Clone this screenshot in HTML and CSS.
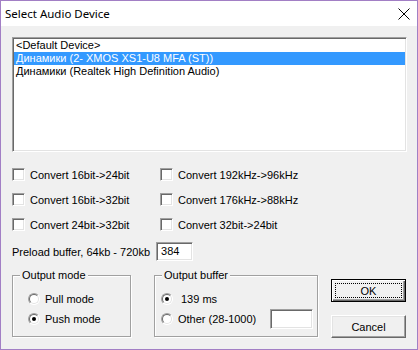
FILE: index.html
```html
<!DOCTYPE html>
<html>
<head>
<meta charset="utf-8">
<link rel="stylesheet" href="styles.css">
</head>
<body>
<div class="window">
  <div class="titlebar">
    <span class="title">Select Audio Device</span>
    <svg class="close" width="12" height="12" viewBox="0 0 12 12"><path d="M0.5 0.5 L11.5 11.5 M11.5 0.5 L0.5 11.5" stroke="#000" stroke-width="1" fill="none"/></svg>
  </div>
  <div class="client">
    <div class="listbox">
      <div class="item">&lt;Default Device&gt;</div>
      <div class="item selected">Динамики (2- XMOS XS1-U8 MFA (ST))</div>
      <div class="item">Динамики (Realtek High Definition Audio)</div>
    </div>
    <div class="checks">
      <label class="check"><span class="box"></span><span>Convert 16bit-&gt;24bit</span></label>
      <label class="check"><span class="box"></span><span>Convert 192kHz-&gt;96kHz</span></label>
      <label class="check"><span class="box"></span><span>Convert 16bit-&gt;32bit</span></label>
      <label class="check"><span class="box"></span><span>Convert 176kHz-&gt;88kHz</span></label>
      <label class="check"><span class="box"></span><span>Convert 24bit-&gt;32bit</span></label>
      <label class="check"><span class="box"></span><span>Convert 32bit-&gt;24bit</span></label>
    </div>
    <div class="preload">
      <span>Preload buffer, 64kb - 720kb</span>
      <div class="edit small">384</div>
    </div>
    <div class="bottom">
      <div class="group g1">
        <span class="legend">Output mode</span>
        <div class="radio"><span class="circle"></span><span>Pull mode</span></div>
        <div class="radio"><span class="circle on"></span><span>Push mode</span></div>
      </div>
      <div class="group g2">
        <span class="legend">Output buffer</span>
        <div class="radio"><span class="circle on"></span><span class="ms">139 ms</span></div>
        <div class="radio"><span class="circle"></span><span>Other (28-1000)</span><div class="edit other"></div></div>
      </div>
      <div class="buttons">
        <div class="btn default"><span class="focus">OK</span></div>
        <div class="btn">Cancel</div>
      </div>
    </div>
  </div>
</div>
</body>
</html>
```

FILE: styles.css
```css
html, body { margin: 0; padding: 0; }
body { font-family: "Liberation Sans", Arial, sans-serif; font-size: 11px; color: #000; }
.window {
  width: 418px; height: 350px; box-sizing: border-box;
  border: 1px solid #a27fc5;
  display: flex; flex-direction: column;
  background: #fff;
}
.titlebar {
  height: 25px; flex: none; display: flex; align-items: center; justify-content: space-between;
  padding: 0 7px 0 4px; background: #fff;
}
.title { font-family: "Noto Sans", "Open Sans", sans-serif; font-size: 11.5px; color: #000; }
.close { display: block; }
.client {
  flex: 1; background: #f0f0f0; padding: 11px 10px 0 11px;
  display: flex; flex-direction: column;
}
.listbox {
  height: 115px; box-sizing: border-box; background: #fff;
  border: 1px solid; border-color: #a0a0a0 #fff #fff #a0a0a0;
  box-shadow: inset 1px 1px #696969, inset -1px -1px #e3e3e3;
  padding: 1px;
}
.item { height: 13px; line-height: 13px; padding-left: 2px; white-space: nowrap; }
.item.selected { background: #3399ff; color: #fff; }
.checks {
  margin-top: 16px;
  display: grid; grid-template-columns: 148px auto; row-gap: 12px;
}
.check { display: flex; align-items: center; height: 13px; gap: 5px; }
.box {
  width: 13px; height: 13px; box-sizing: border-box; background: #fff; flex: none;
  border: 1px solid; border-color: #a0a0a0 #fff #fff #a0a0a0;
  box-shadow: inset 1px 1px #696969, inset -1px -1px #e3e3e3;
}
.preload { margin-top: 11px; display: flex; align-items: center; gap: 6px; height: 19px; }
.edit {
  box-sizing: border-box; background: #fff; height: 19px;
  border: 1px solid; border-color: #a0a0a0 #fff #fff #a0a0a0;
  box-shadow: inset 1px 1px #696969, inset -1px -1px #e3e3e3;
  padding: 0 4px; line-height: 17px;
}
.edit.small { width: 37px; }
.bottom { margin-top: 14px; display: flex; align-items: flex-start; }
.group {
  position: relative; box-sizing: border-box; height: 62px;
  border: 1px solid #a0a0a0; box-shadow: inset 1px 1px #fff, 1px 1px #fff;
  padding: 17px 0 0 15px;
  display: flex; flex-direction: column; gap: 8px;
}
.g1 { width: 119px; }
.g2 { width: 164px; margin-left: 23px; padding-left: 6px; padding-right: 4px; }
.legend {
  position: absolute; top: -7px; left: 7px; background: #f0f0f0; padding: 0 2px; line-height: 13px;
}
.radio { display: flex; align-items: center; height: 12px; gap: 5px; }
.circle {
  width: 12px; height: 12px; box-sizing: border-box; border-radius: 50%; flex: none; position: relative;
  border: 1px solid; border-color: #a0a0a0 #fff #fff #a0a0a0; background: #fff;
}
.circle::before {
  content: ""; position: absolute; inset: 0; border-radius: 50%;
  border: 1px solid; border-color: #696969 #e3e3e3 #e3e3e3 #696969;
}
.circle.on::after {
  content: ""; position: absolute; left: 3px; top: 3px; width: 4px; height: 4px; border-radius: 50%; background: #000;
}
.ms { padding-left: 3px; }
.edit.other { width: 43px; height: 20px; margin-left: auto; }
.buttons { margin-left: 13px; margin-top: 4px; display: flex; flex-direction: column; gap: 13px; }
.btn {
  width: 75px; height: 23px; box-sizing: border-box;
  border: 1px solid; border-color: #fff #696969 #696969 #fff;
  box-shadow: inset -1px -1px #a0a0a0, inset 1px 1px #e3e3e3;
  display: flex; align-items: center; justify-content: center; background: #f0f0f0;
}
.btn.default {
  border: 1px solid #000;
  box-shadow: inset 1px 1px #fff, inset -1px -1px #696969, inset -2px -2px #a0a0a0;
  padding: 3px;
}
.focus {
  flex: 1; align-self: stretch; border: 1px dotted #000; display: flex; align-items: center; justify-content: center;
}
```
